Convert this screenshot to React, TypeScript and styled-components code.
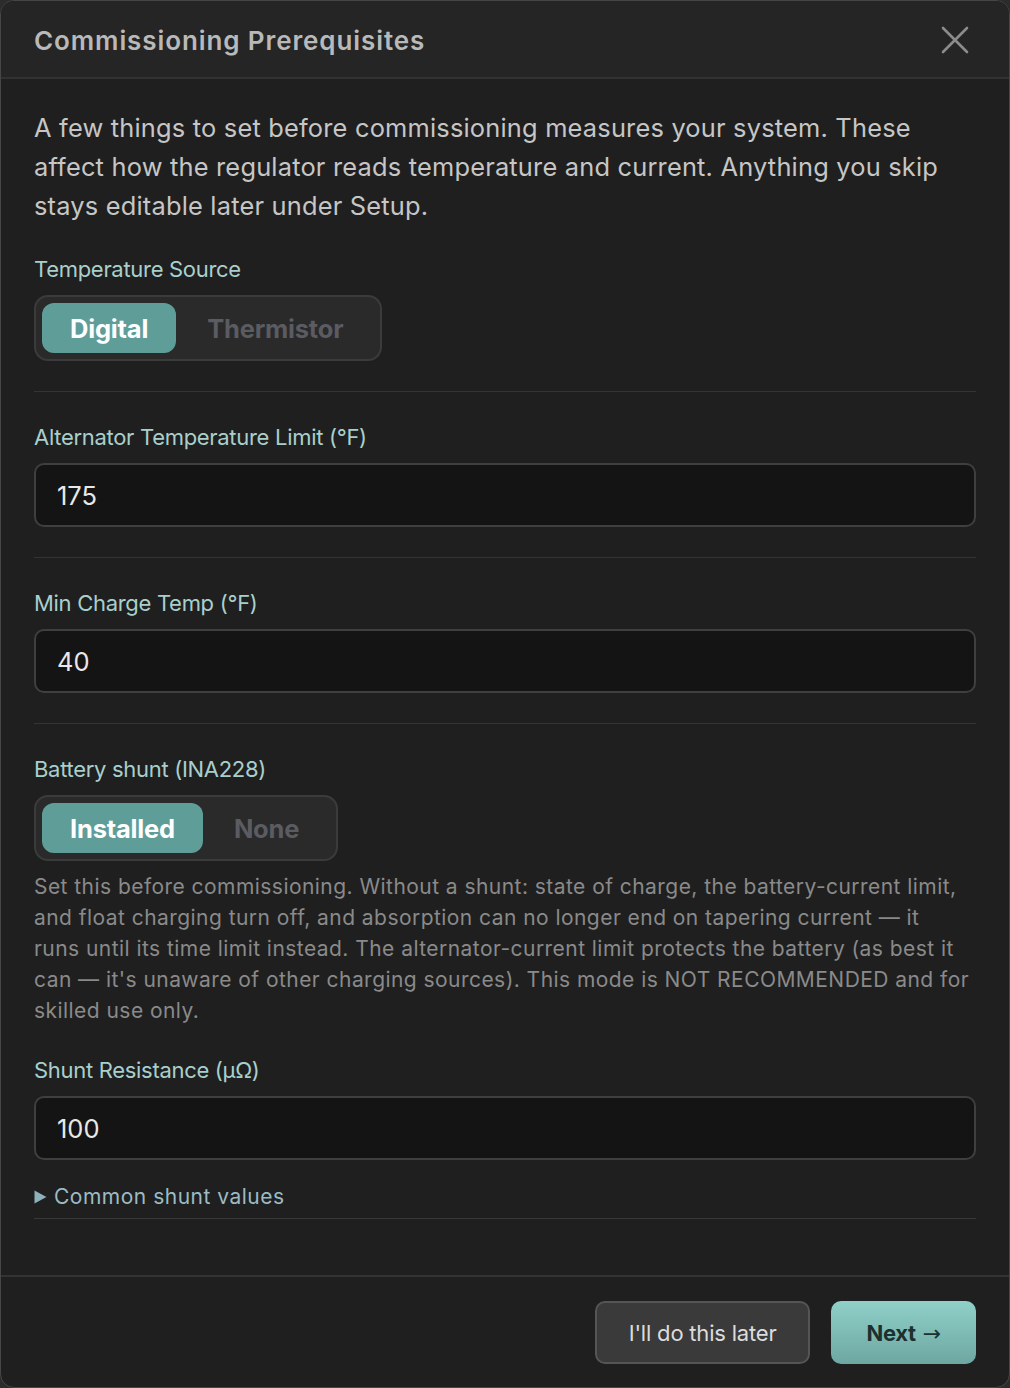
import { useState } from 'react';
import styled, { createGlobalStyle } from 'styled-components';

const GlobalStyle = createGlobalStyle`
  html, body {
    margin: 0;
    padding: 0;
    background: #2c2c2c;
  }
  * {
    box-sizing: border-box;
  }
`;

interface SegmentProps {
  active: boolean;
}

const App = () => {
  const [source, setSource] = useState('Digital');
  const [shunt, setShunt] = useState('Installed');

  return (
    <>
      <GlobalStyle />
      <Modal>
        <Header>
          <Title>Commissioning Prerequisites</Title>
          <CloseButton aria-label="Close">
            <svg width="28" height="28" viewBox="0 0 28 28" fill="none">
              <path
                d="M2 2 L26 26 M26 2 L2 26"
                stroke="#8c8c8c"
                strokeWidth="2.6"
                strokeLinecap="round"
              />
            </svg>
          </CloseButton>
        </Header>
        <Body>
          <Intro>
            A few things to set before commissioning measures your system. These
            affect how the regulator reads temperature and current. Anything you
            skip stays editable later under Setup.
          </Intro>

          <Section>
            <Label>Temperature Source</Label>
            <Segmented>
              {['Digital', 'Thermistor'].map((opt) => (
                <SegmentButton
                  key={opt}
                  active={source === opt}
                  onClick={() => setSource(opt)}
                >
                  {opt}
                </SegmentButton>
              ))}
            </Segmented>
          </Section>

          <Section>
            <Label>Alternator Temperature Limit (°F)</Label>
            <Input defaultValue="175" />
          </Section>

          <Section>
            <Label>Min Charge Temp (°F)</Label>
            <Input defaultValue="40" />
          </Section>

          <LastSection>
            <Label>Battery shunt (INA228)</Label>
            <Segmented>
              {['Installed', 'None'].map((opt) => (
                <SegmentButton
                  key={opt}
                  active={shunt === opt}
                  onClick={() => setShunt(opt)}
                >
                  {opt}
                </SegmentButton>
              ))}
            </Segmented>
            <Help>
              Set this before commissioning. Without a shunt: state of charge, the
              battery-current limit,
              <br />
              and float charging turn off, and absorption can no longer end on
              tapering current — it
              <br />
              runs until its time limit instead. The alternator-current limit
              protects the battery (as best it
              <br />
              can — it's unaware of other charging sources). This mode is NOT
              RECOMMENDED and for
              <br />
              skilled use only.
            </Help>
            <SubLabel>Shunt Resistance (µΩ)</SubLabel>
            <Input defaultValue="100" />
            <Details>
              <Summary>
                <svg width="13" height="14" viewBox="0 0 13 14">
                  <path d="M0.5 0.5 L12.5 7 L0.5 13.5 Z" fill="#8fb0bd" />
                </svg>
                Common shunt values
              </Summary>
            </Details>
          </LastSection>
        </Body>
        <Footer>
          <LaterButton>I'll do this later</LaterButton>
          <NextButton>
            Next<Arrow>→</Arrow>
          </NextButton>
        </Footer>
      </Modal>
    </>
  );
};

export default App;

const Modal = styled.div`
  display: flex;
  flex-direction: column;
  width: 1010px;
  height: 1388px;
  background: #1f1f1f;
  border: 1px solid #464646;
  border-radius: 14px;
  overflow: hidden;
  font-family: Inter, 'Noto Sans', sans-serif;
`;

const Header = styled.div`
  display: flex;
  align-items: center;
  justify-content: space-between;
  height: 78px;
  padding: 2px 40px 0 33px;
  background: #252525;
  border-bottom: 2px solid #323232;
`;

const Title = styled.h1`
  margin: 0;
  color: #b9b9b9;
  font-size: 26px;
  font-weight: 600;
  letter-spacing: 0.9px;
`;

const CloseButton = styled.button`
  display: flex;
  padding: 0;
  border: none;
  background: none;
  cursor: pointer;
`;

const Body = styled.div`
  flex: 1;
  display: flex;
  flex-direction: column;
  padding: 29px 33px 0;
`;

const Intro = styled.p`
  margin: 0 0 30px;
  color: #c6c6c6;
  font-size: 25.4px;
  line-height: 39px;
  letter-spacing: 0.2px;
`;

const Section = styled.div`
  display: flex;
  flex-direction: column;
  padding-bottom: 30px;
  margin-bottom: 31px;
  border-bottom: 1px solid #343434;
`;

const LastSection = styled.div`
  display: flex;
  flex-direction: column;
`;

const Label = styled.label`
  color: #a9cfcd;
  font-size: 22px;
  line-height: 28px;
  letter-spacing: -0.3px;
  margin-bottom: 12px;
`;

const SubLabel = styled(Label)`
  margin-top: 30px;
`;

const Segmented = styled.div`
  display: flex;
  align-self: flex-start;
  height: 66px;
  padding: 6px;
  background: #2a2a2a;
  border: 2px solid #3b3b3b;
  border-radius: 14px;
`;

const SegmentButton = styled.button<SegmentProps>`
  height: 50px;
  padding: 0 28px;
  border: none;
  border-radius: 12px;
  background: ${({ active }) => (active ? '#5f9d99' : 'transparent')};
  color: ${({ active }) => (active ? '#ffffff' : '#5b5b62')};
  font-family: Inter, 'Noto Sans', sans-serif;
  font-size: 25.5px;
  font-weight: 700;
  letter-spacing: -0.2px;
  cursor: pointer;
  & + & {
    padding: 0 31px;
  }
`;

const Input = styled.input`
  flex-shrink: 0;
  height: 64px;
  padding: 0 21px;
  background: #141414;
  border: 2px solid #3f3f3f;
  border-radius: 10px;
  color: #e8e8e8;
  font-family: Inter, 'Noto Sans', sans-serif;
  font-size: 25.5px;
  outline: none;
`;

const Help = styled.p`
  margin: 10px 0 0;
  color: #8a8a8a;
  font-size: 21px;
  line-height: 31px;
  letter-spacing: 0.45px;
`;

const Details = styled.div`
  margin-top: 24px;
  padding-bottom: 8px;
  border-bottom: 1px solid #383838;
`;

const Summary = styled.div`
  display: flex;
  align-items: center;
  gap: 7px;
  color: #9bbcc4;
  font-size: 21px;
  line-height: 26px;
  letter-spacing: 0.5px;
  cursor: pointer;
`;

const Footer = styled.div`
  display: flex;
  justify-content: flex-end;
  gap: 21px;
  padding: 24px 33px 23px;
  border-top: 2px solid #333333;
`;

const LaterButton = styled.button`
  height: 63px;
  padding: 0 32px;
  background: #3a3a3a;
  border: 2px solid #555555;
  border-radius: 10px;
  color: #dcdcdc;
  font-family: Inter, 'Noto Sans', sans-serif;
  font-size: 22px;
  letter-spacing: -0.2px;
  cursor: pointer;
`;

const NextButton = styled.button`
  height: 63px;
  padding: 0 35px;
  background: linear-gradient(#8fd0c9, #6ea7a1);
  border: none;
  border-radius: 10px;
  color: #1c302f;
  font-family: Inter, 'Noto Sans', sans-serif;
  font-size: 22px;
  font-weight: 700;
  letter-spacing: -0.3px;
  cursor: pointer;
`;

const Arrow = styled.span`
  margin-left: 7px;
  font-family: 'DejaVu Sans', sans-serif;
  font-weight: 400;
`;
